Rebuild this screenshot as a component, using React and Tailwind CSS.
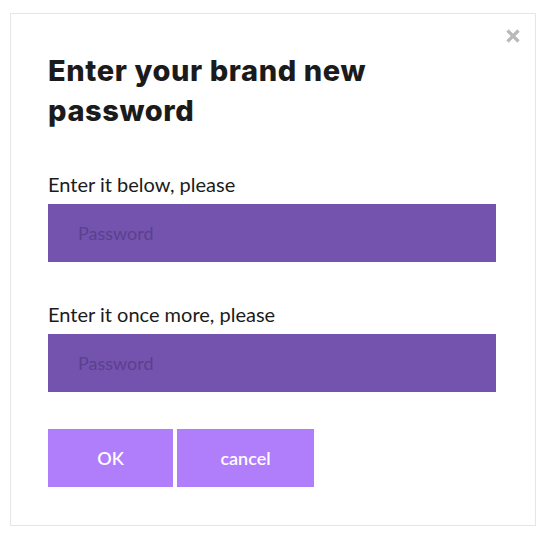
import React from "react";

export default function App() {
  return (
    <div className="w-[547px] h-[540px] bg-white pt-[13px] pl-[10px]">
      <div className="relative w-[526px] h-[513px] border border-[#e6e6e6] bg-white px-[37px] pt-[37px]">
        {/* Close */}
        <button className="absolute right-[15px] top-[15px] w-[14px] h-[14px]" aria-label="Close">
          <svg viewBox="0 0 14 14" className="w-[14px] h-[14px]">
            <path d="M1.5 1.5 L12.5 12.5 M12.5 1.5 L1.5 12.5" stroke="#b9b9b9" strokeWidth="3.2" strokeLinecap="butt" />
          </svg>
        </button>

        <h2 className="font-['Inter',sans-serif] font-extrabold text-[29px] leading-[40px] text-[#1b1b1b] tracking-[0.6px] w-[360px]">
          Enter your brand new password
        </h2>

        <div className="mt-[41px]">
          <label className="block font-['Lato',sans-serif] text-[20px] leading-[24px] text-[#1b1b1b] mb-[8px]">
            Enter it below, please
          </label>
          <input
            type="password"
            placeholder="Password"
            className="block w-[448px] h-[58px] bg-[#7453ae] px-[30px] text-[18px] font-['Lato',sans-serif] text-white placeholder:text-[#5b408f] outline-none"
          />
        </div>

        <div className="mt-[40px]">
          <label className="block font-['Lato',sans-serif] text-[20px] leading-[24px] text-[#1b1b1b] mb-[8px]">
            Enter it once more, please
          </label>
          <input
            type="password"
            placeholder="Password"
            className="block w-[448px] h-[58px] bg-[#7453ae] px-[30px] text-[18px] font-['Lato',sans-serif] text-white placeholder:text-[#5b408f] outline-none"
          />
        </div>

        <div className="mt-[37px] flex gap-[4px]">
          <button className="w-[125px] h-[58px] bg-[#b07dfb] text-white font-['Lato',sans-serif] font-semibold text-[18px]">
            OK
          </button>
          <button className="w-[137px] h-[58px] bg-[#b07dfb] text-white font-['Lato',sans-serif] font-semibold text-[18px]">
            cancel
          </button>
        </div>
      </div>
    </div>
  );
}
